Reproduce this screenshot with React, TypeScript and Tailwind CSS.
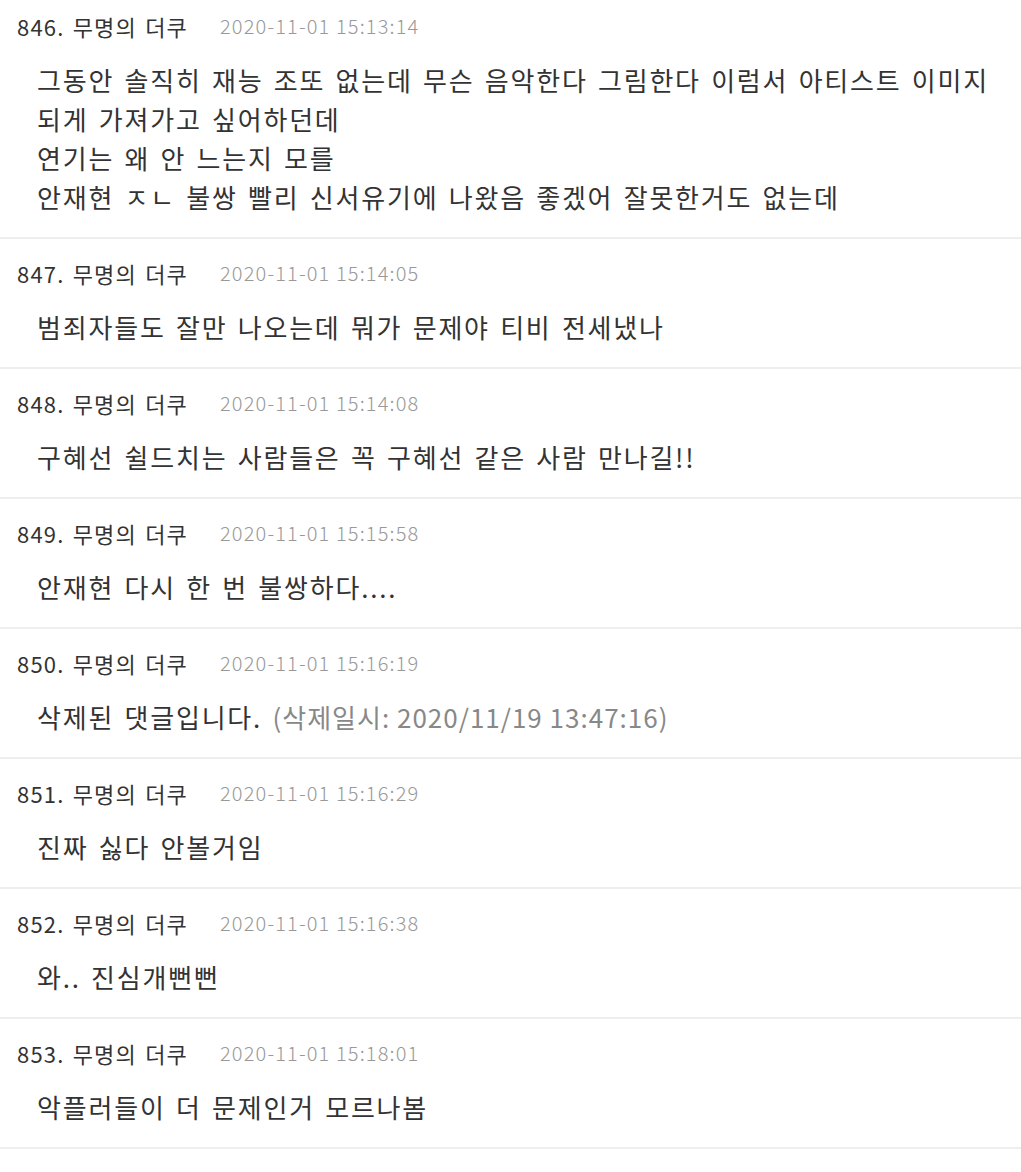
import React from "react";

type C = { no: number; date: string; lines: React.ReactNode[] };

const comments: C[] = [
  {
    no: 846,
    date: "2020-11-01 15:13:14",
    lines: [
      "그동안 솔직히 재능 조또 없는데 무슨 음악한다 그림한다 이럼서 아티스트 이미지",
      "되게 가져가고 싶어하던데",
      "연기는 왜 안 느는지 모를",
      "안재현 ㅈㄴ 불쌍 빨리 신서유기에 나왔음 좋겠어 잘못한거도 없는데",
    ],
  },
  { no: 847, date: "2020-11-01 15:14:05", lines: ["범죄자들도 잘만 나오는데 뭐가 문제야 티비 전세냈나"] },
  { no: 848, date: "2020-11-01 15:14:08", lines: ["구혜선 쉴드치는 사람들은 꼭 구혜선 같은 사람 만나길!!"] },
  { no: 849, date: "2020-11-01 15:15:58", lines: ["안재현 다시 한 번 불쌍하다...."] },
  {
    no: 850,
    date: "2020-11-01 15:16:19",
    lines: [
      <>
        삭제된 댓글입니다.{" "}
        <span className="text-[#888] tracking-[1px] [word-spacing:0px]">(삭제일시: 2020/11/19 13:47:16)</span>
      </>,
    ],
  },
  { no: 851, date: "2020-11-01 15:16:29", lines: ["진짜 싫다 안볼거임"] },
  { no: 852, date: "2020-11-01 15:16:38", lines: ["와.. 진심개뻔뻔"] },
  { no: 853, date: "2020-11-01 15:18:01", lines: ["악플러들이 더 문제인거 모르나봄"] },
];

export default function App() {
  return (
    <div
      className="w-[1021px] h-[1172px] bg-white overflow-hidden"
      style={{ fontFamily: '"Noto Sans CJK KR", "Noto Sans", sans-serif' }}
    >
      {comments.map((c, i) => (
        <div
          key={c.no}
          className={`border-b-2 border-[#eeeeee] pb-[21px] ${i === 0 ? "pt-[11px]" : "pt-[19px]"}`}
        >
          <div className="flex items-center pl-[17px] h-[30px]">
            <span className="text-[22px] text-[#333] tracking-[1.2px] [word-spacing:2px]">{c.no}. 무명의 더쿠</span>
            <span className="ml-[32px] text-[20px] text-[#999] font-light tracking-[1.15px]">{c.date}</span>
          </div>
          <div className="pl-[37px] mt-[19px] text-[26px] leading-[39px] text-[#333] tracking-[1.8px] [word-spacing:2.7px]">
            {c.lines.map((l, j) => (
              <div key={j}>{l}</div>
            ))}
          </div>
        </div>
      ))}
    </div>
  );
}
